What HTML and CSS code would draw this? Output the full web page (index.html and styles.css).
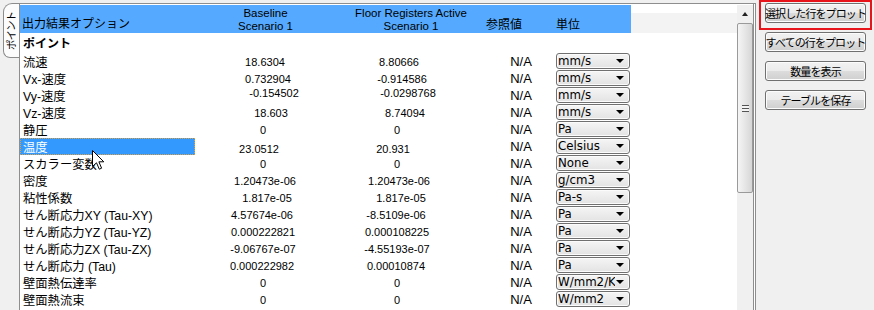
FILE: index.html
```html
<!DOCTYPE html>
<html lang="ja">
<head>
<meta charset="utf-8">
<title>出力結果</title>
<link rel="stylesheet" href="styles.css">
</head>
<body>
<div class="app">
  <div class="tabstrip">
    <div class="tab"><span class="tab-label">ポイント</span></div>
  </div>
  <div class="panel">
    <div class="table">
      <div class="thead">
        <div class="hcols">
          <div class="h h1">出力結果オプション</div>
          <div class="h h2"><span>Baseline</span><span>Scenario 1</span></div>
          <div class="h h3"><span>Floor Registers Active</span><span>Scenario 1</span></div>
          <div class="h h4">参照値</div>
          <div class="h h5">単位</div>
        </div>
        <div class="hrest"></div>
      </div>
      <div class="tbody">
        <div class="group">ポイント</div>
        <div class="row sh2"><div class="c label">流速</div><div class="c num">18.6304</div><div class="c num">8.80666</div><div class="c ref">N/A</div><div class="c unit"><div class="dd"><span class="dd-text">mm/s</span><span class="dd-arrow"></span></div></div></div>
        <div class="row sh5"><div class="c label">Vx-速度</div><div class="c num">0.732904</div><div class="c num">-0.914586</div><div class="c ref">N/A</div><div class="c unit"><div class="dd"><span class="dd-text">mm/s</span><span class="dd-arrow"></span></div></div></div>
        <div class="row sh11 up"><div class="c label">Vy-速度</div><div class="c num">-0.154502</div><div class="c num">-0.0298768</div><div class="c ref">N/A</div><div class="c unit"><div class="dd"><span class="dd-text">mm/s</span><span class="dd-arrow"></span></div></div></div>
        <div class="row sh8"><div class="c label">Vz-速度</div><div class="c num">18.603</div><div class="c num">8.74094</div><div class="c ref">N/A</div><div class="c unit"><div class="dd"><span class="dd-text">mm/s</span><span class="dd-arrow"></span></div></div></div>
        <div class="row"><div class="c label">静圧</div><div class="c num">0</div><div class="c num">0</div><div class="c ref">N/A</div><div class="c unit"><div class="dd"><span class="dd-text">Pa</span><span class="dd-arrow"></span></div></div></div>
        <div class="row shm4 down sel"><div class="c label">温度</div><div class="c num">23.0512</div><div class="c num">20.931</div><div class="c ref">N/A</div><div class="c unit"><div class="dd"><span class="dd-text">Celsius</span><span class="dd-arrow"></span></div></div></div>
        <div class="row"><div class="c label">スカラー変数</div><div class="c num">0</div><div class="c num">0</div><div class="c ref">N/A</div><div class="c unit"><div class="dd"><span class="dd-text">None</span><span class="dd-arrow"></span></div></div></div>
        <div class="row sh2"><div class="c label">密度</div><div class="c num">1.20473e-06</div><div class="c num">1.20473e-06</div><div class="c ref">N/A</div><div class="c unit"><div class="dd"><span class="dd-text">g/cm3</span><span class="dd-arrow"></span></div></div></div>
        <div class="row sh4"><div class="c label">粘性係数</div><div class="c num">1.817e-05</div><div class="c num">1.817e-05</div><div class="c ref">N/A</div><div class="c unit"><div class="dd"><span class="dd-text">Pa-s</span><span class="dd-arrow"></span></div></div></div>
        <div class="row shm1"><div class="c label">せん断応力XY (Tau-XY)</div><div class="c num">4.57674e-06</div><div class="c num">-8.5109e-06</div><div class="c ref">N/A</div><div class="c unit"><div class="dd"><span class="dd-text">Pa</span><span class="dd-arrow"></span></div></div></div>
        <div class="row"><div class="c label">せん断応力YZ (Tau-YZ)</div><div class="c num">0.000222821</div><div class="c num">0.000108225</div><div class="c ref">N/A</div><div class="c unit"><div class="dd"><span class="dd-text">Pa</span><span class="dd-arrow"></span></div></div></div>
        <div class="row"><div class="c label">せん断応力ZX (Tau-ZX)</div><div class="c num">-9.06767e-07</div><div class="c num">-4.55193e-07</div><div class="c ref">N/A</div><div class="c unit"><div class="dd"><span class="dd-text">Pa</span><span class="dd-arrow"></span></div></div></div>
        <div class="row shm1"><div class="c label">せん断応力 (Tau)</div><div class="c num">0.000222982</div><div class="c num">0.00010874</div><div class="c ref">N/A</div><div class="c unit"><div class="dd"><span class="dd-text">Pa</span><span class="dd-arrow"></span></div></div></div>
        <div class="row"><div class="c label">壁面熱伝達率</div><div class="c num">0</div><div class="c num">0</div><div class="c ref">N/A</div><div class="c unit"><div class="dd"><span class="dd-text">W/mm2/K</span><span class="dd-arrow"></span></div></div></div>
        <div class="row"><div class="c label">壁面熱流束</div><div class="c num">0</div><div class="c num">0</div><div class="c ref">N/A</div><div class="c unit"><div class="dd"><span class="dd-text">W/mm2</span><span class="dd-arrow"></span></div></div></div>
      </div>
      <svg class="cursor" width="13" height="20" viewBox="0 0 13 20"><path d="M0.5 0.5 V16.5 L4.5 12.8 L7.3 19.2 L9.6 18.2 L6.9 11.8 H11.8 Z" fill="#fff" stroke="#000" stroke-width="1" stroke-linejoin="miter"/></svg>
    </div>
    <div class="vscroll">
      <div class="sb-up"><span class="sb-arrow"></span></div>
      <div class="sb-thumb"><span class="grip"></span></div>
      <div class="sb-track"></div>
    </div>
  </div>
  <div class="side">
    <div class="hl"><div class="btn">選択した行をプロット</div></div>
    <div class="btns">
      <div class="btn">すべての行をプロット</div>
      <div class="btn">数量を表示</div>
      <div class="btn">テーブルを保存</div>
    </div>
  </div>
</div>
</body>
</html>
```

FILE: styles.css
```css
body {
  margin: 0;
  background: #f0f0f0;
  font-family: "Liberation Sans", "Noto Sans CJK JP", sans-serif;
  font-size: 12px;
  color: #000;
}

.app {
  display: flex;
  width: 874px;
  height: 310px;
  overflow: hidden;
}

/* left tab strip */
.tabstrip {
  width: 19px;
  flex: none;
  padding-top: 3px;
  box-sizing: border-box;
}

.tab {
  margin-left: 3px;
  width: 16px;
  height: 55px;
  box-sizing: border-box;
  border: 1px solid #8c8c8c;
  border-right: none;
  border-radius: 9px 0 0 7px;
  background: #fcfcfc;
  display: flex;
  align-items: center;
  justify-content: center;
  overflow: hidden;
}

.tab-label {
  writing-mode: vertical-rl;
  text-orientation: sideways;
  transform: rotate(180deg);
  font-family: "Noto Sans CJK JP", sans-serif;
  font-size: 10.5px;
  letter-spacing: -1px;
  line-height: 1;
  white-space: nowrap;
}

/* main panel */
.panel {
  width: 737px;
  flex: none;
  margin-top: 3px;
  box-sizing: border-box;
  border-top: 1px solid #8e8e8e;
  border-left: 1px solid #8e8e8e;
  border-right: 3px double #8e8e8e;
  padding-top: 1px;
  background: #fff;
  display: flex;
  align-items: flex-start;
}

.table {
  width: 717px;
  flex: none;
  position: relative;
  background: #fff;
  height: 310px;
}

.thead {
  display: flex;
  height: 28px;
}

.hcols {
  display: grid;
  grid-template-columns: 175px 136px 132px 92px 76px;
  background: #55aaff;
}

.hrest {
  flex: 1;
  background: linear-gradient(#ffffff 0 8px, #f3f3f3 8px);
}

.h {
  display: flex;
  flex-direction: column;
  justify-content: flex-end;
  line-height: 13px;
  font-size: 11.5px;
  white-space: nowrap;
}

.h1 {
  padding-left: 2px;
  padding-bottom: 2px;
  font-size: 12px;
}

.h2 {
  align-items: center;
  padding-left: 5px;
}

.h3 {
  align-items: center;
  padding-left: 28px;
}

.h4 {
  padding-left: 23px;
  padding-bottom: 1px;
  font-size: 12px;
}

.h5 {
  padding-left: 1px;
  padding-bottom: 1px;
  font-size: 12px;
}

.group {
  height: 17px;
  margin-top: 3px;
  padding-left: 3px;
  font-weight: bold;
  line-height: 17px;
}

.row {
  display: grid;
  grid-template-columns: 175px 136px 132px 92px 76px;
  height: 17px;
}

.c {
  display: flex;
  align-items: center;
  height: 17px;
  box-sizing: border-box;
  white-space: nowrap;
}

.label {
  padding-left: 3px;
  font-size: 12.3px;
}

.num {
  justify-content: center;
  font-size: 11px;
}

.ref {
  justify-content: center;
  padding-left: 24px;
  font-size: 13px;
}

.unit {
  align-items: flex-start;
  padding-left: 1px;
}

/* per-row value offsets */
.sh2 .num { padding-left: 4px; }
.sh4 .num { padding-left: 8px; }
.sh5 .num { padding-left: 10px; }
.sh8 .num { padding-left: 16px; }
.sh11 .num { padding-left: 22px; }
.shm1 .num { padding-right: 2px; }
.shm4 .num { padding-right: 8px; }
.up .num { padding-bottom: 6px; }
.down .num { padding-top: 4px; }

.sel .label {
  background: #3399ff;
  color: #fff;
  outline: 1px dotted #e0a040;
  outline-offset: -1px;
}

/* dropdown */
.dd {
  width: 74px;
  height: 16px;
  box-sizing: border-box;
  border: 1px solid #707070;
  border-radius: 3px;
  background: linear-gradient(#f5f5f5, #e3e3e3);
  box-shadow: inset 0 0 0 1px #fbfbfb;
  display: flex;
  align-items: center;
}

.dd-text {
  width: 57px;
  flex: none;
  overflow: hidden;
  padding-left: 1px;
  font-family: "DejaVu Sans", sans-serif;
  font-size: 11.8px;
  line-height: 14px;
}

.dd-arrow {
  margin-left: auto;
  margin-right: 5px;
  width: 0;
  height: 0;
  border-left: 4px solid transparent;
  border-right: 4px solid transparent;
  border-top: 4px solid #000;
}

.cursor {
  position: absolute;
  left: 72px;
  top: 145px;
}

/* scrollbar */
.vscroll {
  width: 16px;
  flex: none;
  height: 310px;
  background: #f0f0f0;
  display: flex;
  flex-direction: column;
}

.sb-up {
  height: 18px;
  flex: none;
  display: flex;
  align-items: center;
  justify-content: center;
}

.sb-arrow {
  width: 0;
  height: 0;
  border-left: 3.5px solid transparent;
  border-right: 3.5px solid transparent;
  border-bottom: 4px solid #222;
}

.sb-thumb {
  height: 170px;
  flex: none;
  box-sizing: border-box;
  border: 1px solid #9a9a9a;
  border-radius: 2px;
  background: linear-gradient(90deg, #f5f5f5, #e6e6e6 50%, #d6d6d6);
  display: flex;
  align-items: center;
  justify-content: center;
}

.grip {
  width: 7px;
  height: 7px;
  background: repeating-linear-gradient(#555 0 1px, #f4f4f4 1px 3px);
}

.sb-track {
  flex: 1;
}

/* right side buttons */
.side {
  flex: 1;
  padding-left: 3px;
}

.hl {
  width: 113px;
  height: 30px;
  box-sizing: border-box;
  border: 2px solid #e8141c;
  padding: 1px 0 0 4px;
}

.btns {
  margin: 2px 0 0 6px;
  display: flex;
  flex-direction: column;
  gap: 9px;
}

.btn {
  width: 101px;
  height: 20px;
  box-sizing: border-box;
  border: 1px solid #707070;
  border-radius: 3px;
  background: linear-gradient(#f2f2f2 0%, #ebebeb 50%, #dddddd 50%, #cfcfcf 100%);
  box-shadow: inset 0 0 0 1px #fcfcfc;
  font-family: "Noto Sans CJK JP", sans-serif;
  font-size: 11px;
  letter-spacing: -0.9px;
  display: flex;
  align-items: center;
  justify-content: center;
  white-space: nowrap;
}
```
